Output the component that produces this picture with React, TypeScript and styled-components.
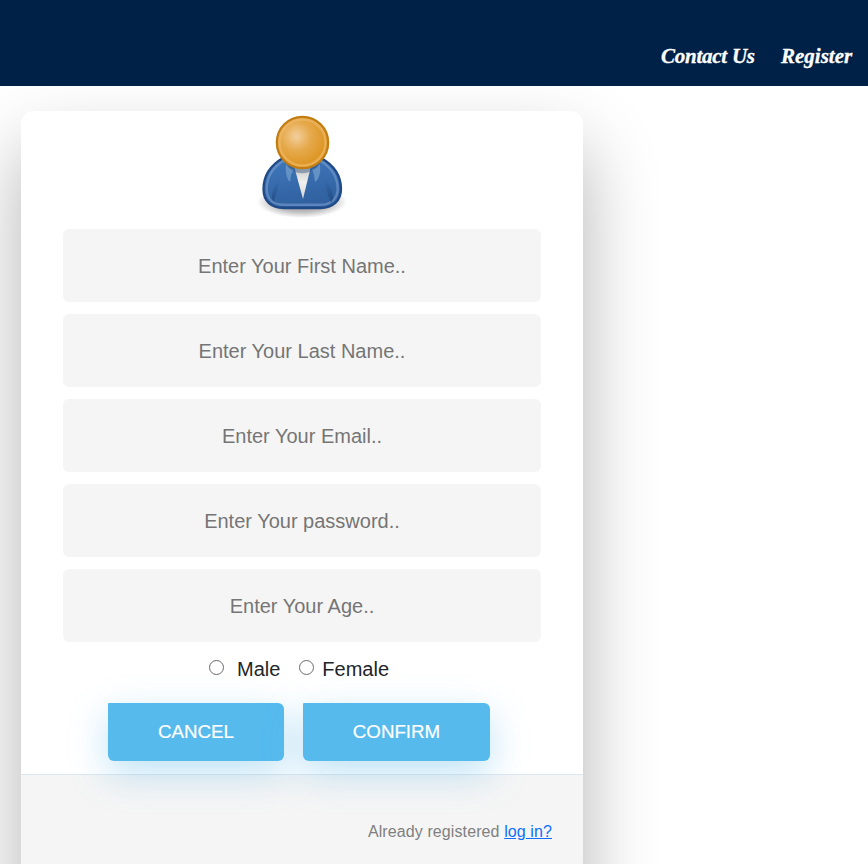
import React from 'react';
import styled, { createGlobalStyle } from 'styled-components';

const GlobalStyle = createGlobalStyle`
  *, *::before, *::after { box-sizing: border-box; }
  body {
    margin: 0;
    background: #fff;
    color: #212529;
    font: 20px/30px "Liberation Sans", Arial, sans-serif;
  }
`;

const Page = styled.div`
  height: 100vh;
  overflow: hidden;
`;

const Header = styled.header`
  position: relative;
  z-index: 2;
  height: 86px;
  padding: 42px 15px 0 0;
  display: flex;
  justify-content: flex-end;
  gap: 26px;
  background: #002147;
`;

const NavLink = styled.a<{ $width: number; $spacing: number }>`
  width: ${(p) => p.$width}px;
  color: #fff;
  font: italic bold 21px/28px "Liberation Serif", serif;
  letter-spacing: ${(p) => p.$spacing}px;
  -webkit-text-stroke: 0.3px #fff;
  white-space: nowrap;
  text-decoration: none;
`;

const Card = styled.main`
  width: 562px;
  height: 800px;
  margin: 25px 0 0 21px;
  display: flex;
  flex-direction: column;
  border-radius: 12.5px;
  background: #fff;
  box-shadow: 0 37.5px 75px rgba(0, 0, 0, 0.3);
`;

const Form = styled.form`
  position: relative;
  z-index: 1;
  height: 663px;
  flex: none;
  display: flex;
  flex-direction: column;
  align-items: center;
`;

const Avatar = styled.svg`
  width: 100px;
  height: 112px;
  margin: 0 2px 6px 0;
  flex: none;
`;

const Field = styled.input`
  width: 478px;
  height: 73px;
  flex: none;
  margin-bottom: 12px;
  padding: 2px 40px 0;
  border: 0;
  border-radius: 6.25px;
  background: #f5f5f5;
  color: #0d0d0d;
  font: 20px "Liberation Sans", Arial, sans-serif;
  text-align: center;
  &::placeholder { color: #757575; opacity: 1; }
`;

const Choices = styled.div`
  width: 382px;
  height: 30px;
  margin-right: 6px;
  padding-left: 101px;
  display: flex;
  align-items: center;
  gap: 19px;
`;

const Choice = styled.label<{ $gap: number }>`
  display: flex;
  align-items: center;
  gap: ${(p) => p.$gap}px;
`;

const Radio = styled.input`
  appearance: none;
  width: 15px;
  height: 15px;
  margin: 0 0 3px;
  border: 1px solid #6b6b6b;
  border-radius: 50%;
  background: #fff;
  &:checked { box-shadow: inset 0 0 0 3px #fff; background: #0075ff; }
`;

const Actions = styled.div`
  width: 382px;
  margin: 19px 6px 0 0;
  display: flex;
  justify-content: space-between;
`;

const Button = styled.button<{ $width: number }>`
  width: ${(p) => p.$width}px;
  height: 58px;
  padding: 0 0 1px;
  border: 0;
  border-radius: 1px 6px 6px 6px;
  background: #56baed;
  box-shadow: 0 12.5px 37.5px rgba(95, 186, 233, 0.4);
  color: #fff;
  font: 18.75px "Liberation Sans", Arial, sans-serif;
  text-transform: uppercase;
  -webkit-text-stroke: 0.2px #fff;
`;

const Footer = styled.footer`
  flex: 1;
  padding: 45px 31px 0;
  border-top: 1px solid #dce8f1;
  background: #f5f5f5;
  color: #808080;
  font-size: 16px;
  line-height: 24px;
  letter-spacing: 0.1px;
  text-align: right;
`;

const LoginLink = styled.a`
  color: #0d6efd;
  text-decoration: underline;
`;

const fields = [
  { label: 'Enter Your First Name..', type: 'text' },
  { label: 'Enter Your Last Name..', type: 'text' },
  { label: 'Enter Your Email..', type: 'email' },
  { label: 'Enter Your password..', type: 'password' },
  { label: 'Enter Your Age..', type: 'text' },
];

function UserIcon() {
  return (
    <Avatar viewBox="0 0 100 112" aria-hidden="true">
      <defs>
        <radialGradient id="head" cx="0.38" cy="0.38" r="0.56">
          <stop offset="0" stopColor="#f2cf9d" />
          <stop offset="0.5" stopColor="#e6aa4d" />
          <stop offset="1" stopColor="#de9726" />
        </radialGradient>
        <linearGradient id="coat" x1="0" y1="0" x2="0.25" y2="1">
          <stop offset="0" stopColor="#4079be" />
          <stop offset="1" stopColor="#30609f" />
        </linearGradient>
        <radialGradient id="ground">
          <stop offset="0" stopColor="#000" stopOpacity="0.5" />
          <stop offset="0.65" stopColor="#000" stopOpacity="0.24" />
          <stop offset="1" stopColor="#000" stopOpacity="0" />
        </radialGradient>
        <linearGradient id="shirt" x1="0" y1="0" x2="0" y2="1">
          <stop offset="0" stopColor="#c5c5c3" />
          <stop offset="0.5" stopColor="#f0f0ee" />
          <stop offset="1" stopColor="#d5d5d5" />
        </linearGradient>
        <linearGradient id="fold" x1="0" y1="0" x2="0" y2="1">
          <stop offset="0" stopColor="#173e70" stopOpacity="0" />
          <stop offset="1" stopColor="#173e70" stopOpacity="0.55" />
        </linearGradient>
      </defs>
      <ellipse cx="51" cy="91" rx="45" ry="16" fill="url(#ground)" />
      <path d="M32 47C20 54 12.5 64 12.5 78c0 12.5 8 19 20 19h37c12 0 20.500-7 20.500-19 0-14-7.500-24-20-31Z" fill="url(#coat)" stroke="#204a87" strokeWidth="2.3" />
      <path d="M32 50C21 57 15.700 66 15.700 78c0 10 6.300 15.800 17 15.800h36c11 0 18-6 18-15.800 0-12-5.700-21-17-28Z" fill="none" stroke="#7aa0cf" strokeOpacity="0.58" strokeWidth="2.4" />
      <path d="M28 69c-5 7-8 14-7 19l2 3c2-8 4-13 5-22ZM74 69c6 7 9 14 8 19l-2 4c-3-8-5-14-6-23Z" fill="url(#fold)" />
      <path d="M43 55h17l-8 33Z" fill="url(#shirt)" />
      <path d="M35 53c3 4 6 5 8 5l-3 6-1 7c-3-3-5-9-4-18ZM69 53c-3 4-6 5-8 5l2 6 1 7c4-3 6-9 5-18Z" fill="#709bc9" opacity="0.8" />
      <path d="M33 50c8 10 29 10 37 0l-5 7c-8 7-20 7-27 0Z" fill="#244a7c" opacity="0.4" />
      <circle cx="51.500" cy="31.500" r="25.700" fill="url(#head)" stroke="#c17d11" strokeWidth="2.2" />
      <circle cx="51.500" cy="31.500" r="23" fill="none" stroke="#f0bd70" strokeOpacity="0.6" strokeWidth="2.5" />
    </Avatar>
  );
}

export default function App() {
  return (
    <>
      <GlobalStyle />
      <Page>
        <Header>
          <NavLink href="#contact" $width={94} $spacing={-0.25}>Contact Us</NavLink>
          <NavLink href="#register" $width={72} $spacing={0}>Register</NavLink>
        </Header>
        <Card>
          <Form>
            <UserIcon />
            {fields.map((f) => (
              <Field key={f.label} type={f.type} placeholder={f.label} />
            ))}
            <Choices>
              <Choice $gap={13}><Radio type="radio" name="gender" />Male</Choice>
              <Choice $gap={8}><Radio type="radio" name="gender" />Female</Choice>
            </Choices>
            <Actions>
              <Button type="button" $width={176}>Cancel</Button>
              <Button type="button" $width={187}>Confirm</Button>
            </Actions>
          </Form>
          <Footer>
            Already registered <LoginLink href="#login">log in?</LoginLink>
          </Footer>
        </Card>
      </Page>
    </>
  );
}
